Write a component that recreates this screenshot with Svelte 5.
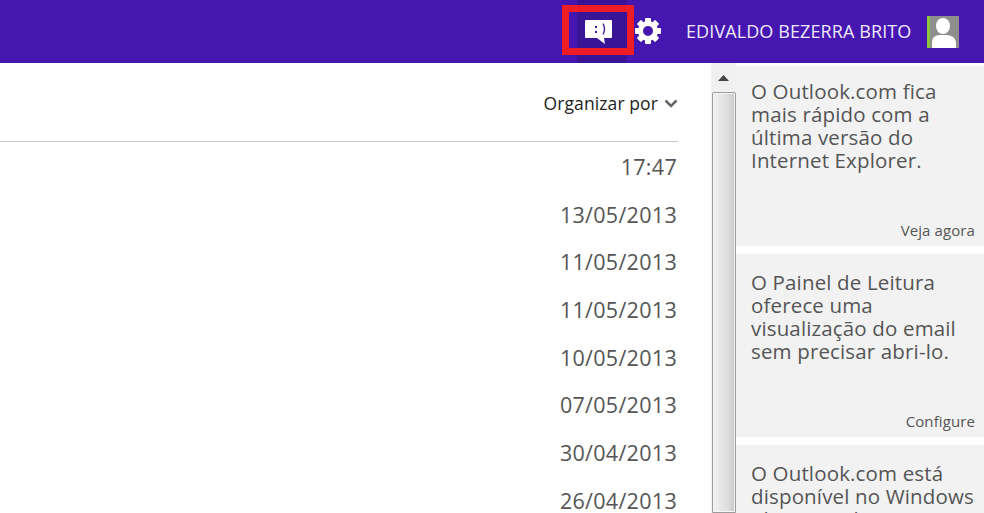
<script>
    const dates = ["17:47", "13/05/2013", "11/05/2013", "11/05/2013", "10/05/2013", "07/05/2013", "30/04/2013", "26/04/2013"];
    const tips = [
        { lines: ["O Outlook.com fica", "mais rápido com a", "última versão do", "Internet Explorer."], link: "Veja agora" },
        { lines: ["O Painel de Leitura", "oferece uma", "visualização do email", "sem precisar abri-lo."], link: "Configure" },
        { lines: ["O Outlook.com está", "disponível no Windows", "Phone e iPhone."], link: "" }
    ];
    const teeth = [0, 45, 90, 135, 180, 225, 270, 315];
</script>

<div class="page">
    <header>
        <div class="feedback">
            <svg width="27" height="24" viewBox="0 0 27 24">
                <path d="M1 0h25q1 0 1 1v16q0 1-1 1h-7l1 6-8-6H1q-1 0-1-1V1q0-1 1-1z" fill="#fff" />
                <path d="M10 6h2v2h-2zM10 11h2v2h-2z" fill="#3a1497" />
                <path d="M18 3.500q3 5.500 0 11" fill="none" stroke="#3a1497" stroke-width="1.300" />
            </svg>
            <div class="annotation"></div>
        </div>
        <svg class="gear" width="26" height="26" viewBox="0 0 26 26">
            <circle cx="13" cy="13" r="7.500" fill="none" stroke="#fff" stroke-width="5" />
            {#each teeth as angle}
                <rect x="10" y="0" width="6" height="6" rx="1" fill="#fff" transform="rotate({angle} 13 13)" />
            {/each}
        </svg>
        <span class="user">EDIVALDO BEZERRA BRITO</span>
        <div class="avatar">
            <svg width="29" height="32" viewBox="0 0 29 32">
                <rect width="29" height="32" fill="#8e8e8e" />
                <ellipse cx="13" cy="10" rx="7" ry="8" fill="#fff" />
                <path d="M2 32v-6q0-6 7-7h8q8 1 9 7v6z" fill="#fff" />
            </svg>
        </div>
    </header>

    <div class="body">
        <main>
            <div class="sort">
                <span>Organizar por</span>
                <svg width="14" height="9" viewBox="0 0 14 9"><path d="M1.500 1.500 7 7l5.500-5.500" fill="none" stroke="#666" stroke-width="2.500" /></svg>
            </div>
            <ul>
                {#each dates as date}
                    <li>{date}</li>
                {/each}
            </ul>
        </main>

        <div class="scrollbar">
            <svg class="arrow" width="11" height="6" viewBox="0 0 11 6"><path d="M5.500 0 11 6H0z" fill="#444" /></svg>
            <div class="thumb"></div>
        </div>

        <aside>
            {#each tips as tip}
                <section>
                    <p>
                        {#each tip.lines as line}
                            <span>{line}</span>
                        {/each}
                    </p>
                    {#if tip.link}
                        <a href="#top">{tip.link}</a>
                    {/if}
                </section>
            {/each}
        </aside>
    </div>
</div>

<style>
    :global(body) {
        margin: 0;
        background: #fff;
        overflow: hidden;
    }

    .page {
        width: 984px;
        height: 513px;
        overflow: hidden;
        font-family: "Open Sans", "Noto Sans", sans-serif;
    }

    header {
        height: 63px;
        background: #4617b0;
        display: flex;
        align-items: center;
        box-sizing: border-box;
        padding-left: 577px;
    }

    .feedback {
        position: relative;
        width: 50px;
        height: 63px;
        background: #3a1497;
        display: flex;
        align-items: center;
        box-sizing: border-box;
        padding-left: 8px;
    }

    .annotation {
        position: absolute;
        left: -15px;
        top: 5px;
        width: 72px;
        height: 50px;
        box-sizing: border-box;
        border: 7px solid #ee1c25;
    }

    .gear {
        margin-left: 8px;
        margin-bottom: 1px;
    }

    .user {
        margin-left: 25px;
        color: #efe9fa;
        font-size: 18px;
        letter-spacing: 0.1px;
        margin-bottom: 2px;
        white-space: nowrap;
    }

    .avatar {
        margin-left: 16px;
        margin-top: 1px;
        display: flex;
        border-left: 3px solid #8cc63f;
        height: 32px;
    }

    .body {
        display: flex;
        height: 450px;
    }

    main {
        width: 711px;
        box-sizing: border-box;
        padding-right: 33px;
    }

    .sort {
        height: 79px;
        box-sizing: border-box;
        border-bottom: 1px solid #c9c9c9;
        display: flex;
        justify-content: flex-end;
        align-items: center;
        gap: 6px;
        padding-top: 2px;
        font-size: 17.500px;
        letter-spacing: 0.1px;
        color: #222;
    }

    ul {
        list-style: none;
        margin: 0;
        padding: 1px 1px 0 0;
    }

    li {
        height: 47.700px;
        line-height: 47px;
        text-align: right;
        font-size: 21.500px;
        letter-spacing: 0.3px;
        color: #555;
    }

    .scrollbar {
        width: 25px;
        box-sizing: border-box;
        background: #f0f0f0;
        display: flex;
        flex-direction: column;
        align-items: center;
    }

    .arrow {
        margin-top: 12px;
    }

    .thumb {
        margin-top: 11px;
        width: 24px;
        flex: 1;
        box-sizing: border-box;
        border: 1px solid #9c9c9c;
        border-radius: 2px 2px 0 0;
        box-shadow: inset 0 0 0 1px #f4f4f4;
        background: linear-gradient(to right, #f2f2f2, #dcdcdc 70%, #c6c6c6);
    }

    aside {
        flex: 1;
        padding-top: 3px;
        display: flex;
        flex-direction: column;
        gap: 8px;
    }

    section {
        height: 182.500px;
        flex: none;
        background: #f2f2f2;
        box-sizing: border-box;
        padding: 17px 9px 7px 15px;
        display: flex;
        flex-direction: column;
    }

    section:first-child {
        height: 180px;
        padding-top: 14px;
    }

    p {
        margin: 0;
        font-size: 20.500px;
        line-height: 23px;
        color: #555;
        letter-spacing: 0.15px;
        flex: 1;
    }

    p span {
        display: block;
        white-space: nowrap;
    }

    a {
        align-self: flex-end;
        color: #555;
        font-size: 15px;
        line-height: 18px;
        letter-spacing: 0.1px;
        text-decoration: none;
    }
</style>
